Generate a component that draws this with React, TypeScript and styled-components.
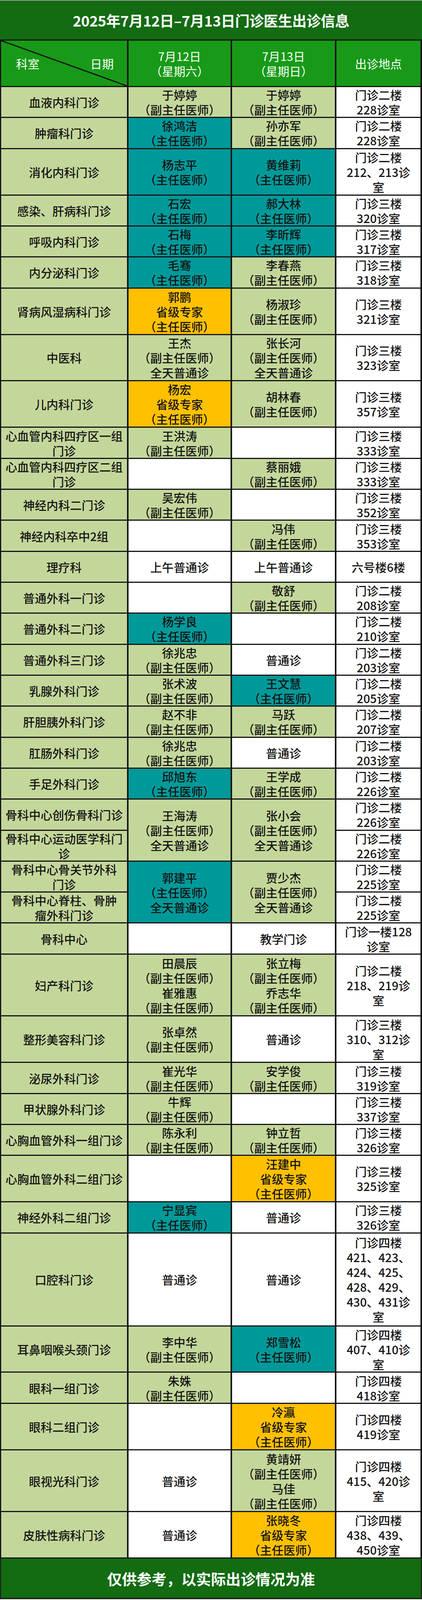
import React from "react";
import styled, { createGlobalStyle } from "styled-components";

// the browser window here is only 4096px tall, so every vertical size is
// the reference size times 4096/4587 and the whole sheet fits the frame
const GlobalStyle = createGlobalStyle`
  body {
    margin: 0;
    background: #ffffff;
  }
`;

type Tone = "green" | "teal" | "gold" | "white";

const tones: Record<Tone, string> = {
  green: "#c4d79b",
  teal: "#009999",
  gold: "#ffc000",
  white: "#ffffff",
};

interface Slot {
  tone: Tone;
  lines: string[];
  span?: number;
}

interface Row {
  units: number;
  dept: string[];
  sat: Slot | null;
  sun: Slot | null;
  place: string[];
}

const FU = "（副主任医师）";
const ZHU = "（主任医师）";
const UNIT = 39.66;
const LINE = 38;

const fu = (name: string): Slot => ({ tone: "green", lines: [name, FU] });
const zhu = (name: string): Slot => ({ tone: "teal", lines: [name, ZHU] });
const star = (name: string): Slot => ({ tone: "gold", lines: [name, "省级专家", ZHU] });
const plain = (text = ""): Slot => ({ tone: "white", lines: text ? [text] : [] });

const rows: Row[] = [
  { units: 2, dept: ["血液内科门诊"], sat: fu("于婷婷"), sun: fu("于婷婷"), place: ["门诊二楼", "228诊室"] },
  { units: 2, dept: ["肿瘤科门诊"], sat: zhu("徐鸿洁"), sun: fu("孙亦军"), place: ["门诊二楼", "228诊室"] },
  { units: 3, dept: ["消化内科门诊"], sat: zhu("杨志平"), sun: zhu("黄维莉"), place: ["门诊二楼", "212、213诊", "室"] },
  { units: 2, dept: ["感染、肝病科门诊"], sat: zhu("石宏"), sun: zhu("郝大林"), place: ["门诊三楼", "320诊室"] },
  { units: 2, dept: ["呼吸内科门诊"], sat: zhu("石梅"), sun: zhu("李昕辉"), place: ["门诊三楼", "317诊室"] },
  { units: 2, dept: ["内分泌科门诊"], sat: zhu("毛骞"), sun: fu("李春燕"), place: ["门诊三楼", "318诊室"] },
  { units: 3, dept: ["肾病风湿病科门诊"], sat: star("郭鹏"), sun: fu("杨淑珍"), place: ["门诊三楼", "321诊室"] },
  {
    units: 3,
    dept: ["中医科"],
    sat: { tone: "green", lines: ["王杰", FU, "全天普通诊"] },
    sun: { tone: "green", lines: ["张长河", FU, "全天普通诊"] },
    place: ["门诊三楼", "323诊室"],
  },
  { units: 3, dept: ["儿内科门诊"], sat: star("杨宏"), sun: fu("胡林春"), place: ["门诊三楼", "357诊室"] },
  { units: 2, dept: ["心血管内科四疗区一组", "门诊"], sat: fu("王洪涛"), sun: plain(), place: ["门诊三楼", "333诊室"] },
  { units: 2, dept: ["心血管内科四疗区二组", "门诊"], sat: plain(), sun: fu("蔡丽娥"), place: ["门诊三楼", "333诊室"] },
  { units: 2, dept: ["神经内科二门诊"], sat: fu("吴宏伟"), sun: plain(), place: ["门诊三楼", "352诊室"] },
  { units: 2, dept: ["神经内科卒中2组"], sat: plain(), sun: fu("冯伟"), place: ["门诊三楼", "353诊室"] },
  { units: 2, dept: ["理疗科"], sat: plain("上午普通诊"), sun: plain("上午普通诊"), place: ["六号楼6楼"] },
  { units: 2, dept: ["普通外科一门诊"], sat: plain(), sun: fu("敬舒"), place: ["门诊二楼", "208诊室"] },
  { units: 2, dept: ["普通外科二门诊"], sat: zhu("杨学良"), sun: plain(), place: ["门诊二楼", "210诊室"] },
  { units: 2, dept: ["普通外科三门诊"], sat: fu("徐兆忠"), sun: plain("普通诊"), place: ["门诊二楼", "203诊室"] },
  { units: 2, dept: ["乳腺外科门诊"], sat: fu("张术波"), sun: zhu("王文慧"), place: ["门诊二楼", "205诊室"] },
  { units: 2, dept: ["肝胆胰外科门诊"], sat: fu("赵不非"), sun: fu("马跃"), place: ["门诊二楼", "207诊室"] },
  { units: 2, dept: ["肛肠外科门诊"], sat: fu("徐兆忠"), sun: plain("普通诊"), place: ["门诊二楼", "203诊室"] },
  { units: 2, dept: ["手足外科门诊"], sat: zhu("邱旭东"), sun: fu("王学成"), place: ["门诊二楼", "226诊室"] },
  {
    units: 2,
    dept: ["骨科中心创伤骨科门诊"],
    sat: { tone: "green", lines: ["王海涛", FU, "全天普通诊"], span: 2 },
    sun: { tone: "green", lines: ["张小会", FU, "全天普通诊"], span: 2 },
    place: ["门诊二楼", "226诊室"],
  },
  { units: 2, dept: ["骨科中心运动医学科门", "诊"], sat: null, sun: null, place: ["门诊二楼", "226诊室"] },
  {
    units: 2,
    dept: ["骨科中心骨关节外科", "门诊"],
    sat: { tone: "teal", lines: ["郭建平", ZHU, "全天普通诊"], span: 2 },
    sun: { tone: "green", lines: ["贾少杰", FU, "全天普通诊"], span: 2 },
    place: ["门诊二楼", "225诊室"],
  },
  { units: 2, dept: ["骨科中心脊柱、骨肿", "瘤外科门诊"], sat: null, sun: null, place: ["门诊二楼", "225诊室"] },
  { units: 2, dept: ["骨科中心"], sat: plain(), sun: plain("教学门诊"), place: ["门诊一楼128", "诊室"] },
  {
    units: 4,
    dept: ["妇产科门诊"],
    sat: { tone: "green", lines: ["田晨辰", FU, "崔雅惠", FU] },
    sun: { tone: "green", lines: ["张立梅", FU, "乔志华", FU] },
    place: ["门诊二楼", "218、219诊", "室"],
  },
  { units: 3, dept: ["整形美容科门诊"], sat: fu("张卓然"), sun: plain("普通诊"), place: ["门诊三楼", "310、312诊", "室"] },
  { units: 2, dept: ["泌尿外科门诊"], sat: fu("崔光华"), sun: fu("安学俊"), place: ["门诊三楼", "319诊室"] },
  { units: 2, dept: ["甲状腺外科门诊"], sat: fu("牛辉"), sun: plain(), place: ["门诊三楼", "337诊室"] },
  { units: 2, dept: ["心胸血管外科一组门诊"], sat: fu("陈永利"), sun: fu("钟立哲"), place: ["门诊三楼", "326诊室"] },
  { units: 3, dept: ["心胸血管外科二组门诊"], sat: plain(), sun: star("汪建中"), place: ["门诊三楼", "325诊室"] },
  { units: 2, dept: ["神经外科二组门诊"], sat: zhu("宁显宾"), sun: plain("普通诊"), place: ["门诊三楼", "326诊室"] },
  {
    units: 6,
    dept: ["口腔科门诊"],
    sat: plain("普通诊"),
    sun: plain("普通诊"),
    place: ["门诊四楼", "421、423、", "424、425、", "428、429、", "430、431诊", "室"],
  },
  { units: 3, dept: ["耳鼻咽喉头颈门诊"], sat: fu("李中华"), sun: zhu("郑雪松"), place: ["门诊四楼", "407、410诊", "室"] },
  { units: 2, dept: ["眼科一组门诊"], sat: fu("朱姝"), sun: plain(), place: ["门诊四楼", "418诊室"] },
  { units: 3, dept: ["眼科二组门诊"], sat: plain(), sun: star("冷瀛"), place: ["门诊四楼", "419诊室"] },
  {
    units: 4,
    dept: ["眼视光科门诊"],
    sat: plain("普通诊"),
    sun: { tone: "green", lines: ["黄靖妍", FU, "马佳", FU] },
    place: ["门诊四楼", "415、420诊", "室"],
  },
  { units: 3, dept: ["皮肤性病科门诊"], sat: plain("普通诊"), sun: star("张晓冬"), place: ["门诊四楼", "438、439、", "450诊室"] },
];

const FONT = `"Noto Sans CJK SC", "Noto Sans", sans-serif`;

const Page = styled.div`
  width: 1080px;
  display: flex;
  flex-direction: column;
  font-family: ${FONT};
`;

const TitleBar = styled.div`
  height: 99px;
  border-top: 2px solid #8e9a8e;
  background: #136b12;
  display: flex;
  align-items: center;
  justify-content: center;
  color: #ffffff;
  font-size: 37px;
  font-weight: 700;
  letter-spacing: -0.5px;
`;

const Grid = styled.div<{ $rows: string }>`
  display: grid;
  grid-template-columns: 322px 261px 263px 215px;
  grid-template-rows: ${(p) => p.$rows};
  column-gap: 4px;
  row-gap: 3px;
  padding: 3px 4px 3px 3px;
  background: #161616;
`;

const HeadCell = styled.div<{ $col: number }>`
  grid-column: ${(p) => p.$col};
  background: #189a18;
  color: #ffffff;
  font-size: 30px;
  line-height: ${LINE}px;
  display: flex;
  flex-direction: column;
  align-items: center;
  justify-content: center;
  text-align: center;
  white-space: nowrap;
`;

const CornerCell = styled(HeadCell)`
  position: relative;
  flex-direction: row;
  justify-content: space-between;
  padding: 0 34px 0 38px;
`;

const Diagonal = styled.svg`
  position: absolute;
  inset: 0;
  width: 100%;
  height: 100%;
`;

const Cell = styled.div<{ $tone: Tone; $col: number; $span?: number }>`
  grid-column: ${(p) => p.$col};
  grid-row: span ${(p) => p.$span || 1};
  background: ${(p) => tones[p.$tone]};
  color: #141414;
  font-size: 30px;
  font-weight: 500;
  line-height: ${LINE}px;
  display: flex;
  flex-direction: column;
  align-items: center;
  justify-content: center;
  text-align: center;
  white-space: nowrap;
`;

const Footer = styled.div`
  height: 100px;
  background: #136b12;
  border: 3px solid #1c2a1c;
  border-top: none;
  border-bottom-width: 4px;
  display: flex;
  align-items: center;
  justify-content: center;
  color: #ffffff;
  font-size: 38px;
  font-weight: 700;
`;

const Lines = ({ lines }: { lines: string[] }) => (
  <>
    {lines.map((l, i) => (
      <span key={i}>{l}</span>
    ))}
  </>
);

export default function App() {
  const template = [
    "116px",
    ...rows.map((r) => `${(r.units * UNIT - 3).toFixed(2)}px`),
  ].join(" ");

  return (
    <>
      <GlobalStyle />
      <Page>
        <TitleBar>2025年7月12日–7月13日门诊医生出诊信息</TitleBar>
        <Grid $rows={template}>
          <CornerCell $col={1}>
            <Diagonal viewBox="0 0 100 100" preserveAspectRatio="none">
              <line
                x1="0"
                y1="0"
                x2="100"
                y2="100"
                stroke="#111"
                strokeWidth="3"
                vectorEffect="non-scaling-stroke"
              />
            </Diagonal>
            <span>科室</span>
            <span>日期</span>
          </CornerCell>
          <HeadCell $col={2}>
            <span>7月12日</span>
            <span>（星期六）</span>
          </HeadCell>
          <HeadCell $col={3}>
            <span>7月13日</span>
            <span>（星期日）</span>
          </HeadCell>
          <HeadCell $col={4}>出诊地点</HeadCell>

          {rows.map((r, i) => (
            <React.Fragment key={i}>
              <Cell $tone="green" $col={1}>
                <Lines lines={r.dept} />
              </Cell>
              {r.sat && (
                <Cell $tone={r.sat.tone} $col={2} $span={r.sat.span}>
                  <Lines lines={r.sat.lines} />
                </Cell>
              )}
              {r.sun && (
                <Cell $tone={r.sun.tone} $col={3} $span={r.sun.span}>
                  <Lines lines={r.sun.lines} />
                </Cell>
              )}
              <Cell $tone="white" $col={4}>
                <Lines lines={r.place} />
              </Cell>
            </React.Fragment>
          ))}
        </Grid>
        <Footer>仅供参考，以实际出诊情况为准</Footer>
      </Page>
    </>
  );
}
